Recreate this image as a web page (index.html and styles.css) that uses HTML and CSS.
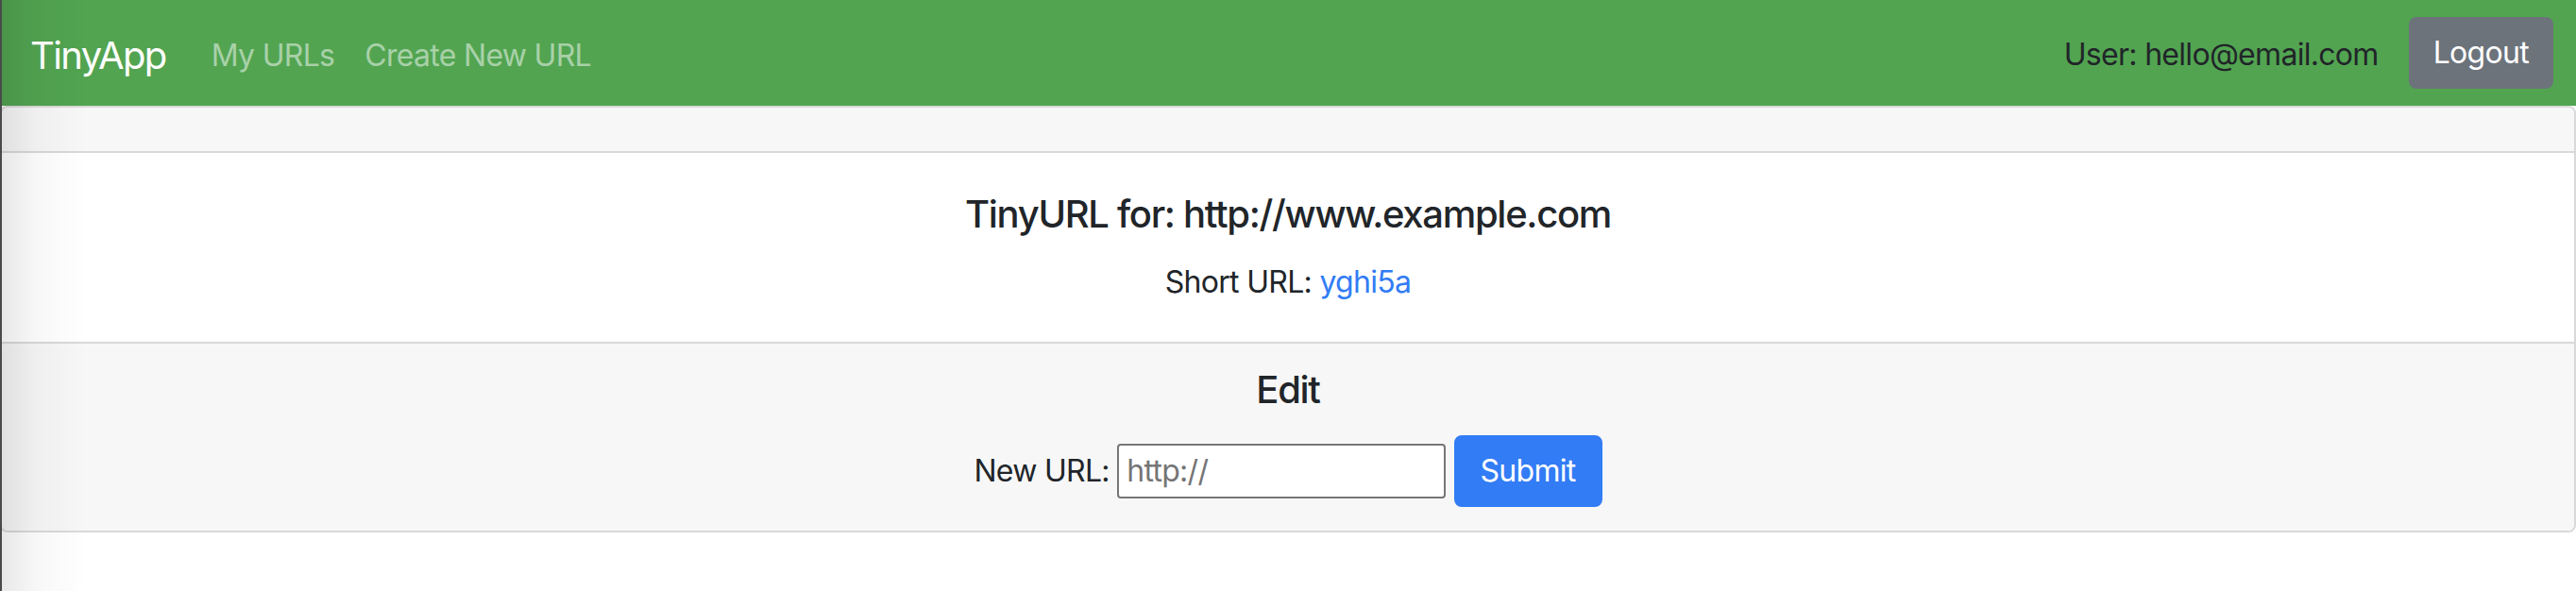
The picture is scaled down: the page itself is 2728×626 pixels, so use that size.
FILE: index.html
```html
<!DOCTYPE html>
<html lang="en">
<head>
<meta charset="utf-8">
<title>TinyApp</title>
<link rel="stylesheet" href="styles.css">
</head>
<body>
<nav class="navbar">
  <a class="brand" href="#">TinyApp</a>
  <div class="nav-links">
    <a class="nav-link" href="#">My URLs</a>
    <a class="nav-link" href="#">Create New URL</a>
  </div>
  <div class="nav-right">
    <span class="nav-user">User: hello@email.com</span>
    <button class="btn btn-secondary" type="button">Logout</button>
  </div>
</nav>
<main class="card">
  <div class="card-header"></div>
  <div class="card-body">
    <h5 class="card-title">TinyURL for: http://www.example.com</h5>
    <p class="card-text">Short URL: <a class="link" href="#">yghi5a</a></p>
  </div>
  <div class="card-footer">
    <h5 class="card-title">Edit</h5>
    <form class="edit-form">
      <label class="form-label" for="longURL">New URL:</label>
      <input class="url-input" id="longURL" type="text" placeholder="http://">
      <button class="btn btn-primary" type="submit">Submit</button>
    </form>
  </div>
</main>
<div class="edge-shade"></div>
</body>
</html>
```
FILE: styles.css
```css
* { box-sizing: border-box; }
html, body {
  margin: 0;
  padding: 0;
  background: #ffffff;
}
body {
  font-family: Inter, "Noto Sans", "Liberation Sans", sans-serif;
  font-size: 32px;
  line-height: 1.5;
  color: #212529;
  letter-spacing: -0.7px;
}
.navbar {
  display: flex;
  align-items: center;
  height: 112px;
  padding: 0 24px 0 32px;
  background: #52a451;
}
.brand {
  color: #ffffff;
  font-size: 40px;
  line-height: 60px;
  letter-spacing: -1.6px;
  text-decoration: none;
  margin-right: 32px;
  padding-top: 5px;
}
.nav-links {
  display: flex;
  padding-top: 5px;
}
.nav-link {
  padding: 16px 16px;
  color: rgba(255, 255, 255, 0.5);
  text-decoration: none;
}
.nav-right {
  margin-left: auto;
  display: flex;
  align-items: center;
  gap: 32px;
}
.nav-user {
  color: #212529;
  padding-top: 3px;
}
.btn {
  font-family: inherit;
  font-size: 32px;
  line-height: 48px;
  letter-spacing: -0.7px;
  padding: 12px 24px;
  border: 2px solid transparent;
  border-radius: 8px;
  color: #ffffff;
  cursor: pointer;
}
.btn-secondary {
  background: #6c737b;
  border-color: #6c737b;
}
.btn-primary {
  background: #327cf5;
  border-color: #327cf5;
  height: 76px;
  padding: 12px 26px;
}
.card {
  display: block;
  border: 2px solid #d9d9d9;
  border-radius: 8px;
  text-align: center;
  background: #ffffff;
}
.card-header {
  height: 48px;
  background: #f7f7f7;
  border-bottom: 2px solid #d9d9d9;
  border-radius: 6px 6px 0 0;
}
.card-body {
  padding: 41px 40px 39px;
}
.card-title {
  margin: 0 0 24px;
  font-size: 40px;
  line-height: 48px;
  font-weight: 500;
  letter-spacing: -1.3px;
}
.card-text {
  margin: 0;
}
.link {
  color: #327cf5;
  text-decoration: none;
}
.card-footer {
  padding: 25px 40px 25px;
  background: #f7f7f7;
  border-top: 2px solid #d9d9d9;
  border-radius: 0 0 6px 6px;
}
.edit-form {
  margin: 0;
}
.url-input {
  width: 348px;
  height: 58px;
  padding: 2px 8px;
  font-family: inherit;
  font-size: 32px;
  letter-spacing: -0.7px;
  color: #212529;
  border: 2px solid #767676;
  border-radius: 4px;
  background: #ffffff;
}
.url-input::placeholder {
  color: #757575;
}
.edge-shade {
  position: fixed;
  left: 0;
  top: 0;
  bottom: 0;
  width: 90px;
  border-left: 2px solid #4a4a4a;
  background: linear-gradient(to right, rgba(0, 0, 0, 0.09), rgba(0, 0, 0, 0.03) 40%, rgba(0, 0, 0, 0));
  pointer-events: none;
}
```
